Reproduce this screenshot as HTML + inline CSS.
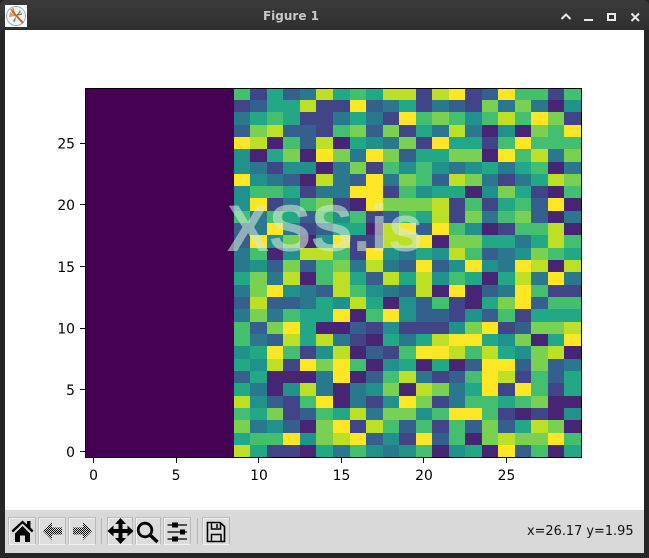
<!DOCTYPE html>
<html><head><meta charset="utf-8"><style>
html,body{margin:0;padding:0;background:#2b2b2b}
#w{position:relative;width:649px;height:558px;overflow:hidden;background:#262626;font-family:"DejaVu Sans",sans-serif}
#tb{position:absolute;left:0;top:0;width:649px;height:30px;background:linear-gradient(#3b3b3b,#2f2f2f);border-radius:6px 6px 0 0}
#title{position:absolute;left:0;width:582px;top:9px;text-align:center;font:bold 12px/14px "DejaVu Sans",sans-serif;color:#c8c8c8}
#cv{position:absolute;left:5px;top:30px;width:639px;height:480px;background:#fff}
#bar{position:absolute;left:5px;top:510px;width:639px;height:43px;background:#d9d9d9}
#pu{position:absolute;left:85px;top:88px;width:149px;height:370px;background:#440154}
#g{position:absolute;left:233.8px;top:87.6px;width:347.2px;height:369.6px;margin:0;padding:0;list-style:none;display:grid;grid-template-columns:repeat(21,1fr);grid-template-rows:repeat(30,1fr)}
#g li{display:block}
.c1{background:#482475}.c2{background:#414487}.c3{background:#355f8d}.c4{background:#2a788e}.c5{background:#21918c}.c6{background:#22a884}.c7{background:#44bf70}.c8{background:#7ad151}.c9{background:#bddf26}.c0{background:#fde725}
#ax{position:absolute;left:0;top:0}
.b{position:absolute;top:517px;height:26px;border:1px solid;border-color:#bdbdbd #b8b8b8 #f2f2f2 #bdbdbd;background:#dcdcdc;box-shadow:inset 1px 1px 0 #f2f2f2}
.s{position:absolute;top:518px;width:1px;height:26px;background:#b5b5b5}
#xy{position:absolute;left:527px;top:524px;font:12.9px/16px "DejaVu Sans",sans-serif;color:#111;white-space:nowrap}
svg{display:block}
</style></head><body><div id="w">
<div id="tb"></div>
<svg style="position:absolute;left:5px;top:5px" width="22" height="22" viewBox="0 0 22 22"><rect width="22" height="22" fill="#fff"/><circle cx="11" cy="11" r="9.5" fill="#f4f4f4" stroke="#8fb4cc" stroke-width="1"/><path d="M11 11L5 4.5 8.5 3z" fill="#e8912d"/><path d="M11 11L5 7 4 12z" fill="#e0a050"/><path d="M7 6L18 18" stroke="#c8622a" stroke-width="2"/><path d="M11 11L15 5 16 7z" fill="#7a9a50"/><path d="M11 11L10 17 8 16z" fill="#5a7a90"/><path d="M12 10L17 9" stroke="#6a6a6a" stroke-width="1.4"/></svg>
<div id="title">Figure 1</div>
<svg style="position:absolute;left:555px;top:6px" width="94" height="22" viewBox="0 0 94 22" fill="none" stroke="#eaeaea" stroke-width="2"><path d="M6.500 13L11 8.500 15.500 13"/><path d="M29 14H38"/><rect x="53" y="8" width="7" height="6"/><path d="M76.500 7.500l7.500 7.500M84 7.500l-7.500 7.500"/></svg>
<div id="cv"></div>
<div id="pu"></div>
<ul id="g">
<li class=c7><li class=c2><li class=c6><li class=c3><li class=c4><li class=c9><li class=c6><li class=c7><li class=c6><li class=c9><li class=c9><li class=c2><li class=c9><li class=c0><li class=c2><li class=c3><li class=c0><li class=c7><li class=c7><li class=c2><li class=c7>
<li class=c2><li class=c3><li class=c6><li class=c6><li class=c9><li class=c2><li class=c2><li class=c0><li class=c3><li class=c4><li class=c6><li class=c2><li class=c4><li class=c3><li class=c2><li class=c8><li class=c4><li class=c8><li class=c4><li class=c1><li class=c5>
<li class=c4><li class=c6><li class=c7><li class=c6><li class=c2><li class=c2><li class=c4><li class=c6><li class=c4><li class=c2><li class=c0><li class=c7><li class=c8><li class=c7><li class=c5><li class=c7><li class=c9><li class=c7><li class=c0><li class=c8><li class=c2>
<li class=c3><li class=c8><li class=c9><li class=c3><li class=c3><li class=c2><li class=c7><li class=c8><li class=c3><li class=c8><li class=c2><li class=c6><li class=c4><li class=c9><li class=c4><li class=c1><li class=c5><li class=c1><li class=c8><li class=c7><li class=c0>
<li class=c0><li class=c9><li class=c1><li class=c7><li class=c3><li class=c9><li class=c1><li class=c6><li class=c5><li class=c4><li class=c8><li class=c2><li class=c0><li class=c6><li class=c6><li class=c2><li class=c7><li class=c0><li class=c7><li class=c7><li class=c7>
<li class=c5><li class=c1><li class=c6><li class=c8><li class=c1><li class=c0><li class=c8><li class=c4><li class=c0><li class=c8><li class=c3><li class=c6><li class=c6><li class=c8><li class=c8><li class=c1><li class=c0><li class=c7><li class=c9><li class=c4><li class=c8>
<li class=c5><li class=c4><li class=c2><li class=c5><li class=c5><li class=c1><li class=c4><li class=c8><li class=c2><li class=c7><li class=c5><li class=c7><li class=c5><li class=c4><li class=c5><li class=c6><li class=c4><li class=c6><li class=c7><li class=c1><li class=c4>
<li class=c0><li class=c5><li class=c4><li class=c3><li class=c1><li class=c9><li class=c4><li class=c3><li class=c0><li class=c4><li class=c8><li class=c7><li class=c3><li class=c9><li class=c8><li class=c4><li class=c2><li class=c4><li class=c6><li class=c9><li class=c8>
<li class=c5><li class=c7><li class=c7><li class=c6><li class=c2><li class=c4><li class=c4><li class=c0><li class=c0><li class=c2><li class=c7><li class=c5><li class=c6><li class=c6><li class=c1><li class=c5><li class=c8><li class=c6><li class=c2><li class=c1><li class=c7>
<li class=c5><li class=c0><li class=c2><li class=c4><li class=c7><li class=c8><li class=c2><li class=c1><li class=c0><li class=c8><li class=c8><li class=c8><li class=c9><li class=c2><li class=c7><li class=c2><li class=c6><li class=c7><li class=c3><li class=c0><li class=c1>
<li class=c7><li class=c4><li class=c7><li class=c6><li class=c3><li class=c7><li class=c5><li class=c7><li class=c2><li class=c3><li class=c7><li class=c6><li class=c9><li class=c2><li class=c8><li class=c4><li class=c7><li class=c8><li class=c3><li class=c1><li class=c4>
<li class=c3><li class=c4><li class=c0><li class=c4><li class=c2><li class=c3><li class=c6><li class=c6><li class=c1><li class=c9><li class=c0><li class=c3><li class=c0><li class=c7><li class=c5><li class=c1><li class=c2><li class=c7><li class=c7><li class=c9><li class=c1>
<li class=c3><li class=c0><li class=c5><li class=c8><li class=c1><li class=c5><li class=c0><li class=c2><li class=c2><li class=c9><li class=c9><li class=c0><li class=c1><li class=c8><li class=c8><li class=c6><li class=c6><li class=c4><li class=c6><li class=c9><li class=c7>
<li class=c4><li class=c7><li class=c1><li class=c5><li class=c9><li class=c9><li class=c7><li class=c2><li class=c0><li class=c5><li class=c4><li class=c6><li class=c5><li class=c9><li class=c7><li class=c3><li class=c4><li class=c5><li class=c8><li class=c7><li class=c6>
<li class=c4><li class=c5><li class=c3><li class=c8><li class=c3><li class=c7><li class=c8><li class=c4><li class=c9><li class=c4><li class=c3><li class=c0><li class=c3><li class=c5><li class=c0><li class=c5><li class=c4><li class=c0><li class=c9><li class=c1><li class=c9>
<li class=c6><li class=c8><li class=c4><li class=c9><li class=c1><li class=c7><li class=c9><li class=c6><li class=c3><li class=c9><li class=c6><li class=c9><li class=c5><li class=c7><li class=c6><li class=c1><li class=c6><li class=c9><li class=c4><li class=c0><li class=c4>
<li class=c4><li class=c8><li class=c0><li class=c5><li class=c4><li class=c3><li class=c9><li class=c7><li class=c5><li class=c4><li class=c3><li class=c9><li class=c1><li class=c0><li class=c1><li class=c3><li class=c4><li class=c0><li class=c7><li class=c2><li class=c2>
<li class=c3><li class=c9><li class=c3><li class=c3><li class=c4><li class=c6><li class=c5><li class=c9><li class=c6><li class=c1><li class=c5><li class=c3><li class=c7><li class=c2><li class=c1><li class=c6><li class=c8><li class=c0><li class=c3><li class=c7><li class=c7>
<li class=c4><li class=c8><li class=c4><li class=c7><li class=c6><li class=c6><li class=c0><li class=c1><li class=c7><li class=c0><li class=c5><li class=c3><li class=c3><li class=c2><li class=c5><li class=c3><li class=c7><li class=c2><li class=c6><li class=c6><li class=c6>
<li class=c7><li class=c3><li class=c8><li class=c0><li class=c6><li class=c1><li class=c1><li class=c3><li class=c2><li class=c5><li class=c2><li class=c2><li class=c2><li class=c5><li class=c8><li class=c0><li class=c2><li class=c3><li class=c8><li class=c8><li class=c9>
<li class=c7><li class=c4><li class=c3><li class=c9><li class=c6><li class=c9><li class=c4><li class=c2><li class=c1><li class=c6><li class=c4><li class=c6><li class=c9><li class=c0><li class=c0><li class=c6><li class=c5><li class=c8><li class=c1><li class=c6><li class=c0>
<li class=c5><li class=c6><li class=c0><li class=c7><li class=c2><li class=c5><li class=c9><li class=c1><li class=c3><li class=c2><li class=c7><li class=c0><li class=c0><li class=c9><li class=c7><li class=c9><li class=c6><li class=c5><li class=c8><li class=c9><li class=c1>
<li class=c6><li class=c5><li class=c9><li class=c2><li class=c0><li class=c8><li class=c0><li class=c7><li class=c1><li class=c5><li class=c6><li class=c1><li class=c6><li class=c1><li class=c3><li class=c0><li class=c0><li class=c3><li class=c8><li class=c3><li class=c4>
<li class=c3><li class=c6><li class=c1><li class=c1><li class=c1><li class=c4><li class=c0><li class=c1><li class=c3><li class=c7><li class=c9><li class=c4><li class=c2><li class=c3><li class=c7><li class=c0><li class=c9><li class=c2><li class=c7><li class=c3><li class=c6>
<li class=c6><li class=c4><li class=c1><li class=c5><li class=c9><li class=c4><li class=c1><li class=c4><li class=c5><li class=c8><li class=c1><li class=c9><li class=c8><li class=c4><li class=c6><li class=c0><li class=c2><li class=c0><li class=c7><li class=c2><li class=c6>
<li class=c9><li class=c5><li class=c3><li class=c2><li class=c7><li class=c0><li class=c1><li class=c4><li class=c2><li class=c5><li class=c0><li class=c8><li class=c2><li class=c4><li class=c7><li class=c7><li class=c6><li class=c7><li class=c8><li class=c1><li class=c1>
<li class=c7><li class=c6><li class=c8><li class=c2><li class=c3><li class=c7><li class=c6><li class=c9><li class=c4><li class=c8><li class=c8><li class=c5><li class=c7><li class=c0><li class=c0><li class=c7><li class=c2><li class=c1><li class=c2><li class=c1><li class=c5>
<li class=c8><li class=c4><li class=c5><li class=c3><li class=c1><li class=c8><li class=c0><li class=c2><li class=c9><li class=c7><li class=c3><li class=c7><li class=c2><li class=c7><li class=c3><li class=c8><li class=c3><li class=c6><li class=c9><li class=c8><li class=c1>
<li class=c6><li class=c7><li class=c7><li class=c0><li class=c5><li class=c8><li class=c9><li class=c0><li class=c3><li class=c5><li class=c2><li class=c0><li class=c3><li class=c7><li class=c1><li class=c8><li class=c9><li class=c8><li class=c8><li class=c0><li class=c7>
<li class=c9><li class=c6><li class=c2><li class=c2><li class=c1><li class=c6><li class=c4><li class=c7><li class=c5><li class=c4><li class=c5><li class=c7><li class=c1><li class=c5><li class=c6><li class=c1><li class=c0><li class=c3><li class=c7><li class=c1><li class=c6>
</ul>
<svg id="ax" width="649" height="558" viewBox="0 0 649 558">
<g fill="none" stroke="#000" stroke-width="1" shape-rendering="crispEdges">
<rect x="85.500" y="88.500" width="496" height="369"/>
<path d="M93.500 458v5M176.500 458v5M258.500 458v5M341.500 458v5M423.500 458v5M506.500 458v5"/>
<path d="M85 451.500h-5M85 389.500h-5M85 328.500h-5M85 266.500h-5M85 204.500h-5M85 143.500h-5"/>
</g>
<g font-family="DejaVu Sans" font-size="13.89" fill="#000" text-anchor="middle">
<text x="93.500" y="480">0</text><text x="176" y="480">5</text><text x="259" y="480">10</text><text x="341.500" y="480">15</text><text x="424" y="480">20</text><text x="506.500" y="480">25</text>
</g>
<g font-family="DejaVu Sans" font-size="13.89" fill="#000" text-anchor="end">
<text x="75" y="457">0</text><text x="75" y="395">5</text><text x="75" y="333.500">10</text><text x="75" y="272">15</text><text x="75" y="210">20</text><text x="75" y="148.500">25</text>
</g>
<text transform="translate(227,251) scale(1,1.05)" font-family="Liberation Sans" font-weight="bold" font-size="63" fill="rgb(210,235,215)" fill-opacity=".58">XSS.is</text>
</svg>
<div id="bar"></div>
<div class="b" style="left:8px;width:26px"></div>
<div class="b" style="left:38px;width:26px"></div>
<div class="b" style="left:68px;width:26px"></div>
<div class="s" style="left:101px"></div>
<div class="b" style="left:107px;width:24px"></div>
<div class="b" style="left:135px;width:24px"></div>
<div class="b" style="left:163px;width:26px"></div>
<div class="s" style="left:197px"></div>
<div class="b" style="left:202px;width:26px"></div>
<svg style="position:absolute;left:0;top:510px" width="240" height="43" viewBox="0 0 240 43">
<defs><pattern id="ck" width="2" height="2" patternUnits="userSpaceOnUse"><rect width="1" height="1" fill="#000"/><rect x="1" y="1" width="1" height="1" fill="#000"/></pattern></defs>
<path d="M11.500 20.500L22.500 10.500 27 14.500V11H30.500V17.500L33.500 20.500 32 22.500 22.500 13.500 13 22.500z" fill="#000"/>
<path d="M15 23.500L22.500 16 30 23.500V32H25V25.500H20V32H15z" fill="#000"/>
<path d="M43 21L52 12V17.500H62V24.500H52V30z" fill="url(#ck)"/>
<path d="M92 21L83 12V17.500H73V24.500H83V30z" fill="url(#ck)"/>
<path d="M120.500 8L126 14H122.500V19H127.500V15.500L133.500 21 127.500 26.500V23H122.500V28H126L120.500 34 115 28H118.500V23H113.500V26.500L107.500 21 113.500 15.500V19H118.500V14H115z" fill="#000"/>
<circle cx="145" cy="20" r="6.800" fill="none" stroke="#000" stroke-width="2.800"/><path d="M150 25L157.500 32" stroke="#000" stroke-width="3.400" fill="none"/>
<g stroke="#000" fill="#000"><path d="M167.500 15H187M167.500 22H187M167.500 29H187" stroke-width="1.300"/><rect x="172" y="12.500" width="6" height="5" stroke="none"/><rect x="180" y="19.500" width="5" height="5" stroke="none"/><rect x="172" y="26.500" width="6" height="5" stroke="none"/></g>
<path d="M207.500 12.500H220L224.500 16.500V31.500H207.500z" fill="none" stroke="#000" stroke-width="1.600"/>
<path d="M211.500 13V19H220.500V13M217 14V18M211.500 31V24.500H221V31" fill="none" stroke="#000" stroke-width="1.500"/>
</svg>
<div id="xy">x=26.17 y=1.95</div>
</div></body></html>
